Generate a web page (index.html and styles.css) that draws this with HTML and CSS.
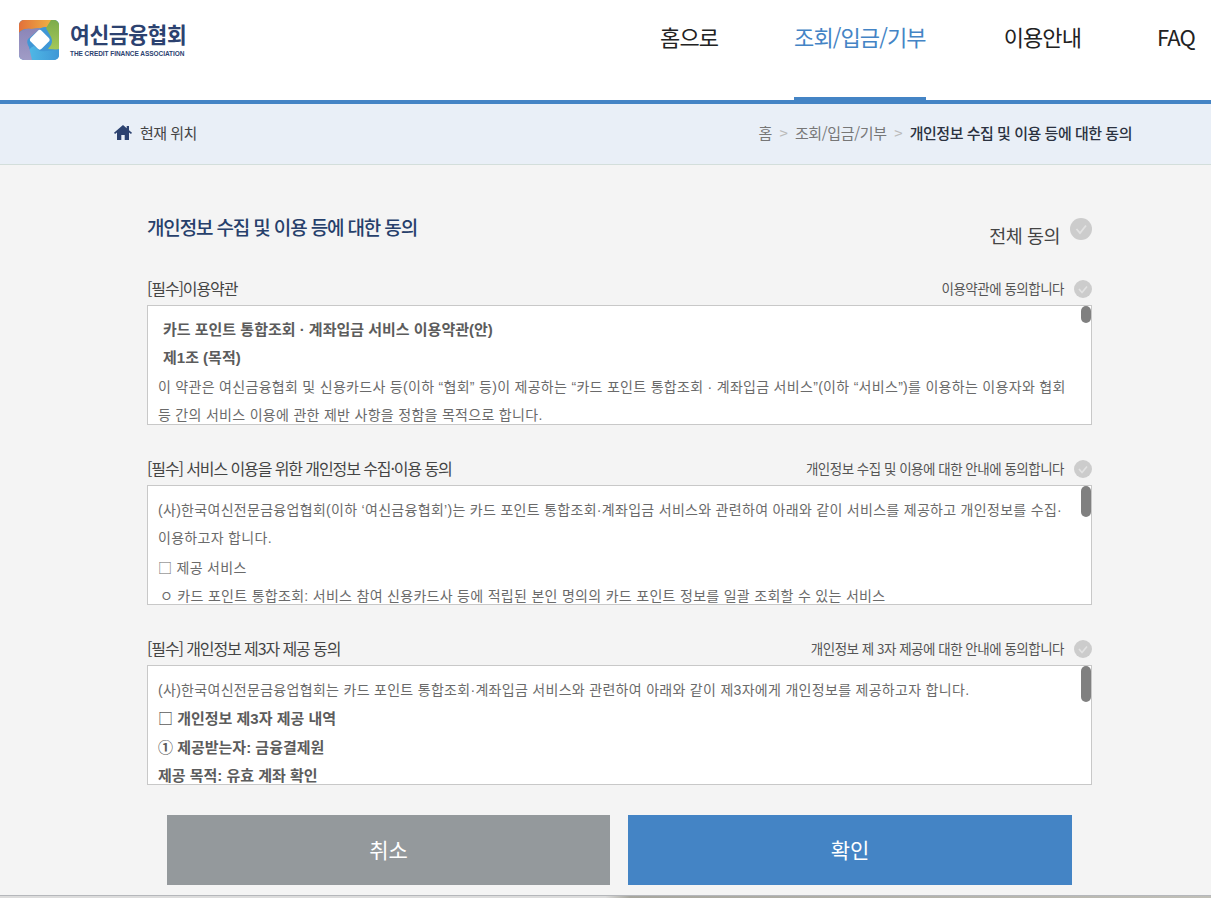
FILE: index.html
```
<!DOCTYPE html>
<html lang="ko">
<head>
<meta charset="utf-8">
<title>개인정보 수집 및 이용 등에 대한 동의</title>
<link rel="stylesheet" href="styles.css">
</head>
<body>
<header class="top">
  <div class="logo">
    <svg class="logo-mark" width="40" height="40" viewBox="0 0 40 40">
      <defs>
        <linearGradient id="g1" x1="0" y1="0" x2="1" y2="0"><stop offset="0" stop-color="#e2703a"/><stop offset="1" stop-color="#eeb043"/></linearGradient>
        <linearGradient id="g2" x1="0" y1="0" x2="0" y2="1"><stop offset="0" stop-color="#7cab4a"/><stop offset="1" stop-color="#a5c85a"/></linearGradient>
        <linearGradient id="g3" x1="0" y1="0" x2="1" y2="0"><stop offset="0" stop-color="#4fb8e6"/><stop offset="1" stop-color="#3f97d6"/></linearGradient>
        <linearGradient id="g4" x1="0" y1="0" x2="0" y2="1"><stop offset="0" stop-color="#8b85b8"/><stop offset="1" stop-color="#a09cc6"/></linearGradient>
      </defs>
      <rect width="40" height="40" rx="5" fill="#3f97d6"/>
      <path d="M5 0h27v8Q26 6 22 8L12 9Q4 8 0 13V5a5 5 0 0 1 5-5z" fill="url(#g1)"/>
      <path d="M32 0h3a5 5 0 0 1 5 5v25q-6-1-11-1L32 25q2-4 0-8L27 8z" fill="url(#g2)"/>
      <path d="M10 30q2-3 5-4l6 5q8 1 19-2v6a5 5 0 0 1-5 5H13q-3-5-3-10z" fill="url(#g3)"/>
      <path d="M0 13q5-5 13-4l9-1-13 11q-2 3 1 8l3 13H5a5 5 0 0 1-5-5z" fill="url(#g4)"/>
      <rect x="13" y="12" width="15.500" height="15.500" rx="3" transform="rotate(45 20.750 19.750)" fill="#fff"/>
    </svg>
    <div class="logo-text">
      <div class="logo-ko">여신금융협회</div>
      <div class="logo-en">THE CREDIT FINANCE ASSOCIATION</div>
    </div>
  </div>
  <nav class="nav">
    <a class="nav-item">홈으로</a>
    <a class="nav-item active">조회/입금/기부</a>
    <a class="nav-item">이용안내</a>
    <a class="nav-item">FAQ</a>
  </nav>
</header>
<div class="crumb">
  <div class="crumb-left">
    <svg class="home" width="18" height="15" viewBox="0 0 18 15"><path d="M9 0L0 7.800 1 9 3 7.400V15h4.300v-5h3.400v5H15V7.400L17 9l1-1.200-3-2.600V1h-2.300v2.200z" fill="#2c4270"/></svg>
    <span>현재 위치</span>
  </div>
  <div class="crumb-right">
    <span>홈</span><span class="sep">&gt;</span><span>조회/입금/기부</span><span class="sep">&gt;</span><span class="cur">개인정보 수집 및 이용 등에 대한 동의</span>
  </div>
</div>
<main class="main">
  <div class="title-row">
    <h1 class="title">개인정보 수집 및 이용 등에 대한 동의</h1>
    <div class="all">전체 동의<span class="check big"><svg viewBox="0 0 22 22"><path d="M6.500 11l3.500 4L16 7.500" fill="none" stroke="#e2e2e2" stroke-width="1.800"/></svg></span></div>
  </div>

  <section class="sec first">
    <div class="sec-head"><h2>[필수]이용약관</h2><div class="agree">이용약관에 동의합니다<span class="check"><svg viewBox="0 0 18 18"><path d="M5 9l3 3.500 5-6" fill="none" stroke="#e2e2e2" stroke-width="1.600"/></svg></span></div></div>
    <div class="box">
      <p class="b ind">카드 포인트 통합조회 · 계좌입금 서비스 이용약관(안)</p>
      <p class="b ind">제1조 (목적)</p>
      <p>이 약관은 여신금융협회 및 신용카드사 등(이하 “협회” 등)이 제공하는 “카드 포인트 통합조회 · 계좌입금 서비스”(이하 “서비스”)를 이용하는 이용자와 협회 등 간의 서비스 이용에 관한 제반 사항을 정함을 목적으로 합니다.</p>
      <div class="thumb t1"></div>
    </div>
  </section>

  <section class="sec">
    <div class="sec-head"><h2>[필수] 서비스 이용을 위한 개인정보 수집·이용 동의</h2><div class="agree">개인정보 수집 및 이용에 대한 안내에 동의합니다<span class="check"><svg viewBox="0 0 18 18"><path d="M5 9l3 3.500 5-6" fill="none" stroke="#e2e2e2" stroke-width="1.600"/></svg></span></div></div>
    <div class="box">
      <p>(사)한국여신전문금융업협회(이하 ‘여신금융협회’)는 카드 포인트 통합조회·계좌입금 서비스와 관련하여 아래와 같이 서비스를 제공하고 개인정보를 수집· 이용하고자 합니다.</p>
      <p><span class="sq">□</span> 제공 서비스</p>
      <p class="sub">ㅇ 카드 포인트 통합조회: 서비스 참여 신용카드사 등에 적립된 본인 명의의 카드 포인트 정보를 일괄 조회할 수 있는 서비스</p>
      <div class="thumb t2"></div>
    </div>
  </section>

  <section class="sec">
    <div class="sec-head"><h2>[필수] 개인정보 제3자 제공 동의</h2><div class="agree">개인정보 제 3자 제공에 대한 안내에 동의합니다<span class="check"><svg viewBox="0 0 18 18"><path d="M5 9l3 3.500 5-6" fill="none" stroke="#e2e2e2" stroke-width="1.600"/></svg></span></div></div>
    <div class="box">
      <p>(사)한국여신전문금융업협회는 카드 포인트 통합조회·계좌입금 서비스와 관련하여 아래와 같이 제3자에게 개인정보를 제공하고자 합니다.</p>
      <p class="b"><span class="sq">□</span> 개인정보 제3자 제공 내역</p>
      <p class="b">① 제공받는자: 금융결제원</p>
      <p class="b">제공 목적: 유효 계좌 확인</p>
      <div class="thumb t3"></div>
    </div>
  </section>

  <div class="actions">
    <button class="btn cancel">취소</button>
    <button class="btn ok">확인</button>
  </div>
</main>
<div class="strip"></div>
</body>
</html>
```
FILE: styles.css
```
* { box-sizing: border-box; }
html, body { margin: 0; padding: 0; }
body { width: 1211px; height: 898px; overflow: hidden; background: #f4f4f4; font-family: "Noto Sans CJK KR", "Noto Sans", sans-serif; color: #333; letter-spacing: -0.5px; }
.top { height: 104px; background: #fff; border-bottom: 4px solid #4484c5; display: flex; justify-content: space-between; padding-left: 19px; }
.logo { display: flex; gap: 11px; padding-top: 20px; align-items: flex-start; }
.logo-mark { display: block; }
.logo-ko { font-size: 21.500px; line-height: 28px; font-weight: 700; color: #2c4270; letter-spacing: -0.4px; }
.logo-en { font-family: "Liberation Sans", sans-serif; font-size: 6.500px; line-height: 9px; margin-top: 1px; color: #2c4270; font-weight: 700; letter-spacing: -0.05px; }
.nav { display: flex; height: 100px; padding-right: 16px; gap: 76px; }
.nav-item { font-size: 22px; line-height: 72px; color: #222; height: 100px; letter-spacing: -0.9px; }
.nav-item.active { color: #4484c5; height: 100px; margin-right: 2px; border-bottom: 3px solid #4484c5; }
.crumb { height: 61px; background: #e9eff7; border-bottom: 1px solid #d3dedb; display: flex; justify-content: space-between; align-items: center; padding: 0 79px 4px 114px; font-size: 15px; color: #777; }
.crumb-left { display: flex; align-items: center; gap: 8px; color: #444; }
.crumb-right { display: flex; gap: 6px; letter-spacing: -0.35px; }
.sep { color: #bbb; margin: 0 1.500px; }
.cur { color: #2b3240; margin-left: 0; font-weight: 500; letter-spacing: -0.47px; }
.main { height: 730px; padding: 0 119px 0 147px; }
.title-row { height: 104px; display: flex; justify-content: space-between; }
.title { margin: 47px 0 0; font-size: 19px; line-height: 30px; font-weight: 500; color: #27406b; letter-spacing: -1.150px; }
.all { display: flex; align-items: flex-start; padding-top: 53px; font-size: 18.500px; line-height: 34px; color: #444; }
.check { display: block; width: 18px; height: 18px; border-radius: 50%; background: #ccc; margin: 2px 0 0 10px; }
.check svg { display: block; width: 100%; height: 100%; }
.check.big { width: 22px; height: 22px; margin: 0 0 0 10px; }
.sec { margin-top: 24px; }
.sec.first { margin-top: 0; }
.sec-head { height: 36px; padding-top: 2px; display: flex; justify-content: space-between; align-items: center; }
.sec-head h2 { margin: 0; font-size: 16px; font-weight: 400; color: #444; letter-spacing: -1.100px; }
.agree { display: flex; align-items: center; font-size: 13.500px; color: #555; }
.box { position: relative; height: 120px; background: #fff; border: 1px solid #c8c8c8; overflow: hidden; padding: 10px 13px 0 10px; font-family: "Liberation Sans", "Noto Sans CJK KR", sans-serif; font-size: 14px; line-height: 28.300px; color: #6a6a6a; letter-spacing: 0.3px; word-break: keep-all; }
.box p { margin: 0; }
.box .b { font-size: 15px; font-weight: 700; color: #5c5c5c; letter-spacing: 0; }
.box .ind { padding-left: 5px; }
.box .sub { padding-left: 2px; }
.box .sq { font-family: "Noto Sans CJK KR", sans-serif; }
.thumb { position: absolute; right: 0; top: 0; width: 10px; border-radius: 5px; background: #808080; }
.t1 { height: 17px; }
.t2 { height: 31px; }
.t3 { height: 36px; }
.actions { display: flex; gap: 18px; padding: 30px 0 0 20px; }
.btn { width: 443px; height: 70px; border: 0; padding: 0 0 3px; color: #fff; font: 400 21px "Noto Sans CJK KR", sans-serif; }
.cancel { background: #94999c; }
.ok { background: #4484c5; width: 444px; }
.strip { height: 3px; background: linear-gradient(90deg, #dcdcdc 0, #dcdcdc 50%, #a8a79f 52%, #c0bfb8 100%); border-top: 1px solid #b5b7bb; }
```
